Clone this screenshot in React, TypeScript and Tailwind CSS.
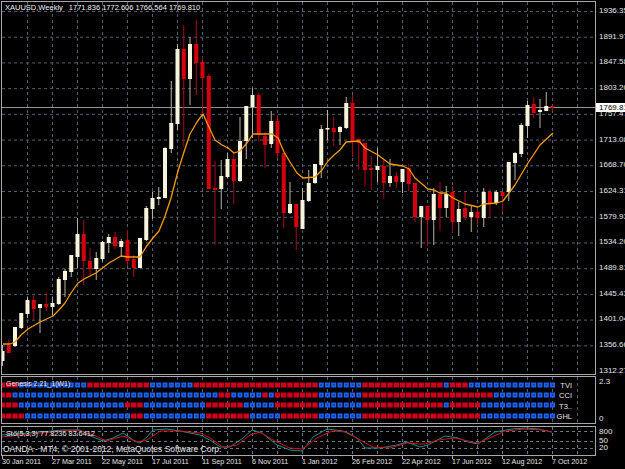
const FONT = "font-['Liberation_Sans',Arial,sans-serif]";

// [high, top, bottom, low, up?] in page pixels, one per week
type Candle = [number, number, number, number, boolean];

const raw: Candle[] = [
  [345, 351, 361, 366, true], [340, 345, 353, 353, false], [327, 327, 346, 347, true], [313, 313, 328, 329, true],
  [297, 300, 314, 318, true], [295, 300, 309, 320, false], [304, 304, 308, 333, true], [293, 304, 307, 311, false],
  [297, 303, 307, 315, true], [277, 279, 304, 305, true], [269, 271, 280, 297, true], [255, 255, 272, 277, true],
  [218, 234, 257, 268, true], [220, 234, 261, 285, false], [248, 261, 269, 277, false], [252, 258, 269, 280, true],
  [241, 242, 259, 262, true], [234, 237, 243, 253, true], [232, 237, 246, 249, false], [239, 241, 247, 257, true],
  [230, 240, 261, 266, false], [255, 259, 268, 277, false], [238, 238, 268, 268, true], [206, 208, 240, 241, true],
  [192, 198, 209, 219, true], [187, 197, 199, 205, true], [147, 148, 198, 198, true], [81, 123, 149, 153, true],
  [44, 49, 124, 130, true], [25, 49, 79, 147, false], [37, 44, 79, 105, true], [20, 44, 63, 95, false],
  [57, 62, 78, 113, false], [74, 76, 189, 189, false], [161, 188, 190, 245, false], [160, 176, 189, 209, true],
  [153, 159, 177, 178, true], [153, 159, 181, 204, false], [117, 141, 181, 182, true], [106, 106, 141, 159, true],
  [88, 95, 107, 138, true], [93, 95, 135, 142, false], [132, 136, 145, 168, false], [111, 121, 144, 148, true],
  [115, 121, 153, 158, false], [153, 153, 213, 228, false], [182, 204, 213, 214, true], [204, 204, 227, 250, false],
  [188, 200, 229, 229, true], [170, 183, 201, 202, true], [164, 164, 183, 184, true], [125, 129, 165, 178, true],
  [110, 128, 129, 140, true], [117, 128, 132, 146, false], [126, 127, 132, 145, true], [97, 103, 128, 129, true],
  [95, 103, 142, 157, false], [138, 139, 143, 170, false], [143, 143, 170, 186, false], [156, 168, 170, 190, false],
  [148, 166, 170, 182, true], [160, 166, 183, 199, false], [159, 176, 183, 187, true], [172, 176, 182, 188, false],
  [169, 169, 182, 193, true], [164, 168, 184, 191, false], [183, 183, 217, 222, false], [206, 206, 217, 248, true],
  [206, 206, 220, 246, false], [188, 194, 220, 245, true], [182, 194, 208, 231, false], [186, 194, 208, 217, true],
  [186, 192, 222, 232, false], [202, 209, 222, 236, true], [192, 208, 217, 220, false], [206, 212, 217, 232, true],
  [207, 212, 218, 225, false], [188, 192, 218, 227, true], [189, 192, 203, 216, false], [190, 192, 203, 205, true],
  [192, 192, 196, 212, false], [162, 162, 192, 201, true], [152, 153, 163, 180, true], [123, 125, 154, 157, true],
  [101, 105, 126, 138, true], [97, 104, 113, 118, false], [99, 110, 112, 128, true], [92, 106, 111, 111, true],
  [105, 106, 107, 111, false],
];

const ma =
  "3,344 10,344 15,342 21,335 28,329 40,322 53,316 59,310 65,303 71,293 78,283 84,279 96,273 109,263 121,256 128,257 140,257 146,247 153,238 159,231 165,216 171,198 178,171 184,152 190,134 197,122 203,114 209,127 215,140 222,145 228,148 234,153 240,151 247,143 253,134 259,134 272,134 278,138 284,152 290,162 297,173 303,178 315,177 322,170 328,161 334,155 340,150 346,142 359,141 365,148 378,155 390,164 403,166 409,169 415,178 428,189 434,190 440,193 446,193 453,198 465,204 478,207 484,204 497,203 503,201 515,185 528,163 540,145 553,133";

const prices = ["1936.35", "1891.97", "1847.58", "1803.20", "1757.47", "1713.08", "1668.70", "1624.31", "1579.93", "1534.20", "1489.81", "1445.43", "1401.04", "1356.66", "1312.27"];
const dates = ["30 Jan 2011", "27 Mar 2011", "22 May 2011", "17 Jul 2011", "11 Sep 2011", "6 Nov 2011", "1 Jan 2012", "26 Feb 2012", "22 Apr 2012", "17 Jun 2012", "12 Aug 2012", "7 Oct 2012"];

// inclusive index runs where a row is blue, everything else is red
const rows: { name: string; y: number; blue: [number, number][] }[] = [
  { name: "TVI", y: 385, blue: [[3, 13], [24, 30], [51, 57], [71, 71], [75, 88]] },
  { name: "CCI", y: 395, blue: [[2, 34], [37, 41], [43, 43], [51, 57], [79, 88]] },
  { name: "T3..", y: 405, blue: [[3, 19], [23, 32], [39, 43], [51, 57], [71, 71], [77, 88]] },
  { name: "GHL", y: 416, blue: [[4, 20], [23, 32], [40, 44], [51, 57], [77, 88]] },
];

const teal = "2,435 40,432 63,430 80,430 93,437 103,441 113,438 123,433 133,440 140,443 147,437 153,430 167,429 180,431 200,435 210,440 220,447 230,447 243,438 252,430 262,433 277,445 290,450 302,451 313,437 327,429 343,431 357,438 365,448 380,448 397,445 407,442 420,447 428,445 445,436 458,438 468,442 478,444 495,432 512,429 525,428 538,429 552,432";
const red = "2,437 40,433 63,431 77,430 93,435 107,441 123,436 137,442 147,440 160,431 180,431 200,433 210,438 223,447 237,445 250,435 260,432 273,440 290,448 302,449 317,438 332,431 347,432 360,440 373,447 390,448 407,443 420,444 425,444 438,440 455,438 468,441 478,443 492,437 505,431 525,429 542,430 552,432";

const vGrid = Array.from({ length: 23 }, (_, k) => 27.5 + 25 * k);
const hGrid = Array.from({ length: 14 }, (_, k) => 11.5 + 25.72 * k);

function MainChart() {
  return (
    <svg width={593} height={372} viewBox="2 2 593 372" className="block">
      {vGrid.map((x) => (
        <line key={x} x1={x} x2={x} y1={2} y2={374} stroke="#4f6070" strokeDasharray="3 3" />
      ))}
      {hGrid.map((y) => (
        <line key={y} x1={2} x2={595} y1={y} y2={y} stroke="#4f6070" strokeDasharray="3 3" />
      ))}
      <line x1={2} x2={595} y1={107.5} y2={107.5} stroke="#8d9398" />
      {raw.map(([hi, top, bottom, lo, up], i) => {
        const x = 2.5 + 6.25 * i;
        return (
          <g key={i}>
            <line x1={x} x2={x} y1={hi} y2={lo} stroke={up ? "#b8b59c" : "#a8061e"} />
            <rect x={x - 2} y={top} width={4} height={Math.max(bottom - top, 1.5)} fill={up ? "#f8f5dc" : "#d6000f"} />
          </g>
        );
      })}
      <polyline points={ma} fill="none" stroke="#f39a10" strokeWidth={1.3} strokeLinejoin="round" />
    </svg>
  );
}

function SignalPanel() {
  return (
    <svg width={593} height={46} viewBox="2 377 593 46" className="block">
      {vGrid.map((x) => (
        <line key={x} x1={x} x2={x} y1={377} y2={423} stroke="#4f6070" strokeDasharray="3 3" />
      ))}
      {rows.map((row) =>
        Array.from({ length: 89 }, (_, i) => {
          const x = 2.5 + 6.25 * i;
          const isBlue = row.blue.some(([a, b]) => i >= a && i <= b);
          if (!isBlue) {
            return <rect key={row.name + i} x={x - 2.7} y={row.y - 2.5} width={5.4} height={5} fill="#d0001a" />;
          }
          return (
            <g key={row.name + i}>
              <rect x={x - 2.5} y={row.y - 2.5} width={5} height={5} fill="#1c62ee" />
              <rect x={x - 0.75} y={row.y - 0.75} width={1.5} height={1.5} fill="#0b2f8a" />
            </g>
          );
        }),
      )}
    </svg>
  );
}

function StochPanel() {
  return (
    <svg width={593} height={28} viewBox="2 427 593 28" className="block">
      {vGrid.map((x) => (
        <line key={x} x1={x} x2={x} y1={427} y2={455} stroke="#6a7784" strokeDasharray="3 3" />
      ))}
      {[431.5, 441.5, 448.5].map((y) => (
        <line key={y} x1={2} x2={595} y1={y} y2={y} stroke="#6a7784" strokeDasharray="3 3" />
      ))}
      <polyline points={teal} fill="none" stroke="#14908c" />
      <polyline points={red} fill="none" stroke="#d4101c" />
    </svg>
  );
}

export default function App() {
  return (
    <div className={`w-[625px] h-[469px] bg-black overflow-hidden pt-px text-[#e4e4e4] ${FONT}`}>
      {/* main chart + price axis */}
      <div className="flex h-[374px]">
        <div className="relative ml-px w-[595px] h-[374px] border border-[#a8a8a8]">
          <MainChart />
          <div className="absolute left-[3px] top-[2px] flex gap-[6px] text-[7.5px] leading-[8px] whitespace-pre text-[#f0f0f0]">
            <span>XAUUSD,Weekly</span>
            <span>1771.836 1772.606 1766.564 1769.810</span>
          </div>
        </div>
        <div className="relative flex-1 flex flex-col justify-between pt-[6px] pl-[3px] text-[8px] leading-[8px] whitespace-nowrap">
          {prices.map((p) => (
            <span key={p}>{p}</span>
          ))}
          <span className="absolute left-0 top-[102px] w-full h-[9px] bg-white text-black pl-[3px] text-[8px] leading-[9px]">1769.81</span>
        </div>
      </div>

      {/* signal rows */}
      <div className="flex h-[49px] mt-px">
        <div className="relative ml-px w-[595px] h-[48px] border border-[#a8a8a8]">
          <SignalPanel />
          <span className="absolute left-[4px] top-[3px] text-[7px] leading-[8px] text-[#f0e4e4]">Genesis 2.21_1(W1)</span>
          <div className="absolute right-[23px] top-[4px] flex flex-col items-end text-[7.5px] leading-[10.3px]">
            {rows.map((r) => (
              <span key={r.name}>{r.name}</span>
            ))}
          </div>
        </div>
        <div className="flex-1 flex flex-col justify-between pl-[3px] pt-[2px] pb-[2px] text-[8px] leading-[8px]">
          <span>2.3</span>
          <span>0</span>
        </div>
      </div>

      {/* stochastic */}
      <div className="flex h-[31px] mt-px">
        <div className="relative ml-px w-[595px] h-[30px] border border-[#a8a8a8]">
          <StochPanel />
          <span className="absolute left-[4px] top-[3px] text-[7.3px] leading-[8px] whitespace-pre">Sto(5,3,3) 77.8236 83.6412</span>
          <span className="absolute left-[1px] top-[17px] text-[8.5px] leading-[10px] whitespace-pre">OANDA - MT4, © 2001-2012, MetaQuotes Software Corp.</span>
        </div>
        <div className="flex-1 flex flex-col gap-px pl-[3px] pt-[2px] text-[8px] leading-[8px]">
          <span>800</span>
          <span>50</span>
          <span className="-mt-[2px]">20</span>
        </div>
      </div>

      {/* date axis */}
      <div className="flex ml-[2px] w-[600px] h-[12px] -mt-[1px]">
        {dates.map((d) => (
          <div key={d} className="w-[50px] shrink-0">
            <div className="w-px h-[3px] bg-[#b0b0b0]" />
            <span className="block whitespace-nowrap text-[7.2px] leading-[8px] -mt-px">{d}</span>
          </div>
        ))}
      </div>
    </div>
  );
}
